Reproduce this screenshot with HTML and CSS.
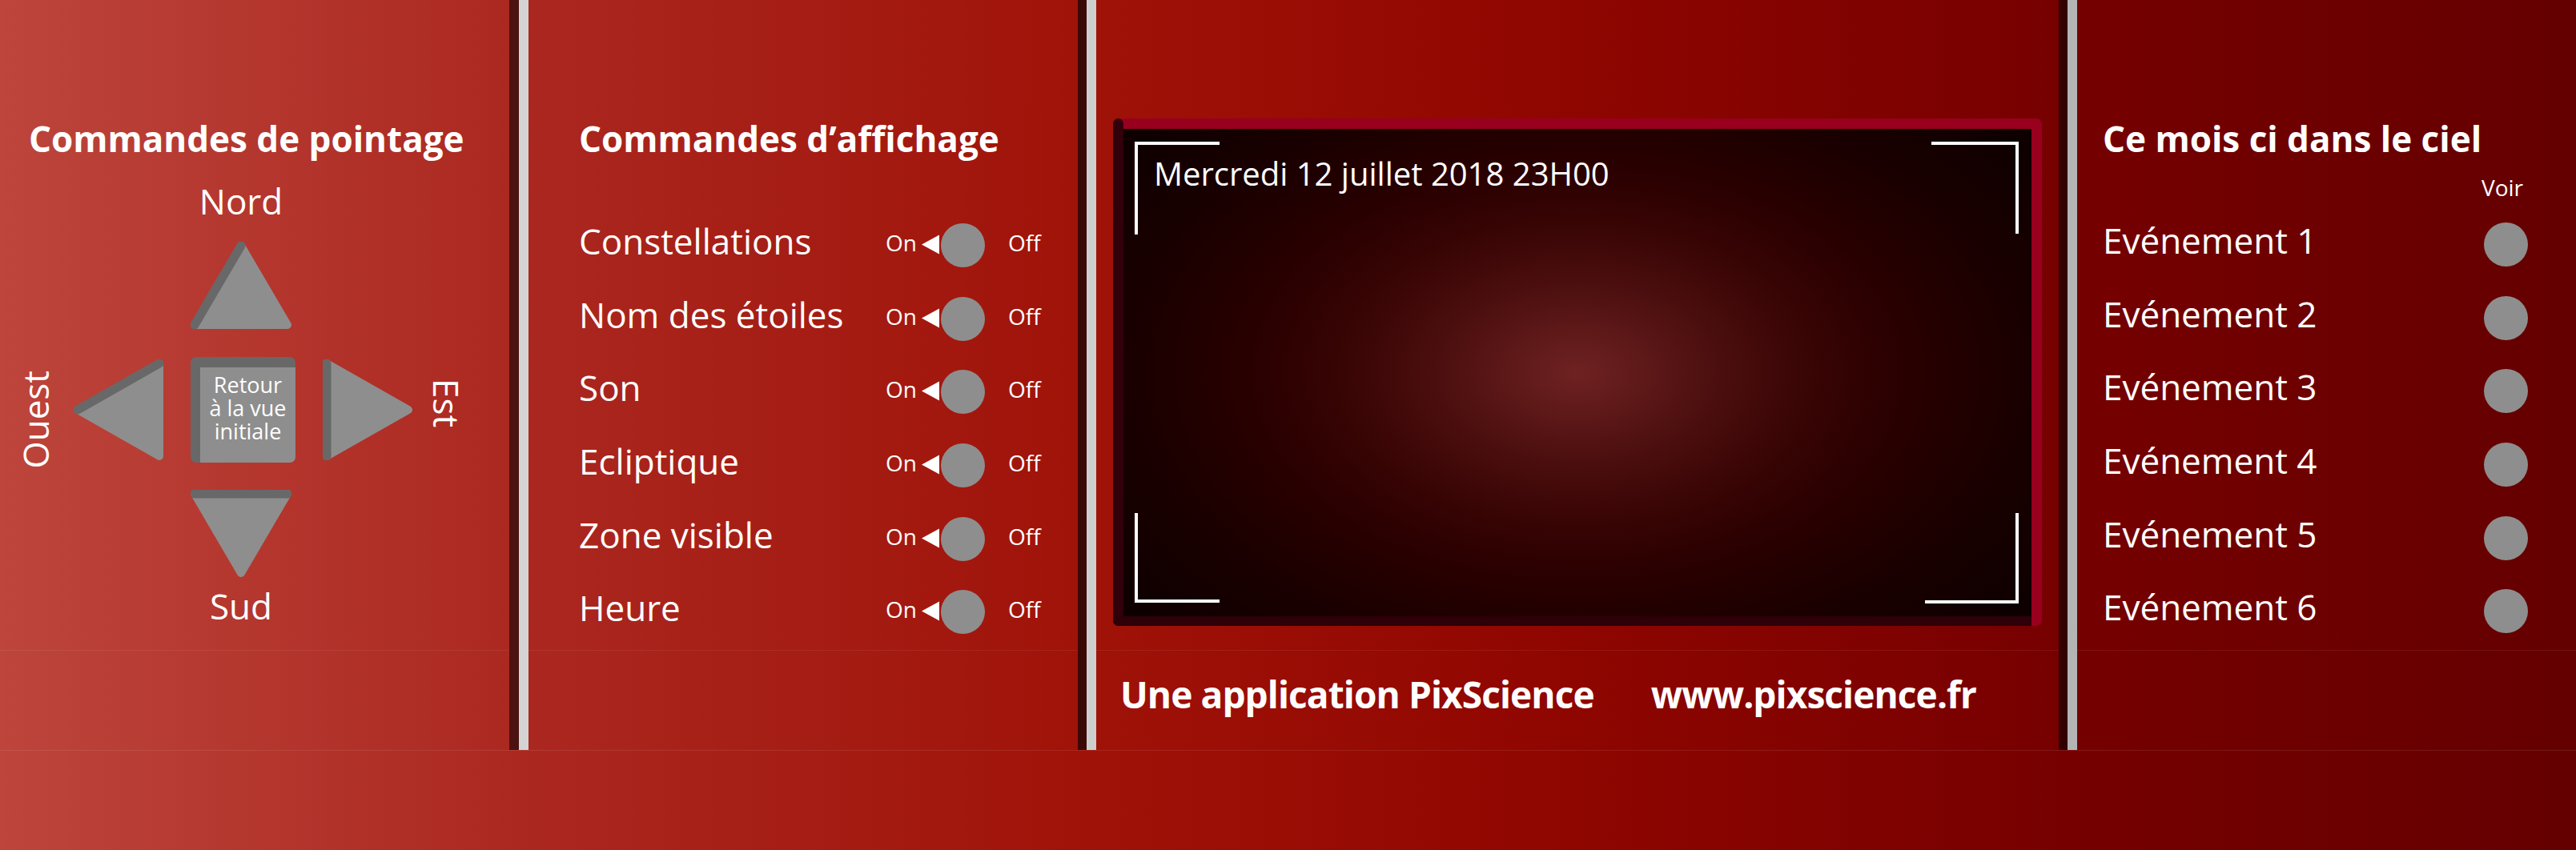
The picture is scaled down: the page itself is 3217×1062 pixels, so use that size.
FILE: index.html
```html
<!DOCTYPE html>
<html lang="fr">
<head>
<meta charset="utf-8">
<title>PixScience</title>
<link rel="stylesheet" href="styles.css">
</head>
<body>
<div class="main">
  <section class="panel p-point">
    <div class="panel-body">
      <h2 class="title">Commandes de pointage</h2>
      <div class="dpad">
        <div class="compass nord">Nord</div>
        <svg class="arrow-up" width="126" height="109" viewBox="0 0 126 109"><polygon points="5,104 63,5 121,104" fill="#8e8e8e" stroke="#8e8e8e" stroke-width="10" stroke-linejoin="round"/><line x1="5" y1="104" x2="63" y2="5" stroke="#686868" stroke-width="11" stroke-linecap="round"/></svg>
        <div class="mid-row">
          <div class="compass ouest">Ouest</div>
          <svg class="arrow-left" width="112" height="126" viewBox="0 0 112 126"><polygon points="5,63 107,5 107,121" fill="#8e8e8e" stroke="#8e8e8e" stroke-width="10" stroke-linejoin="round"/><line x1="5" y1="63" x2="107" y2="5" stroke="#686868" stroke-width="11" stroke-linecap="round"/></svg>
          <div class="center-box"><span class="cb-line">Retour</span><span class="cb-line">à la vue</span><span class="cb-line">initiale</span></div>
          <svg class="arrow-right" width="112" height="126" viewBox="0 0 112 126"><polygon points="5,5 107,63 5,121" fill="#8e8e8e" stroke="#8e8e8e" stroke-width="10" stroke-linejoin="round"/><line x1="5" y1="5" x2="5" y2="121" stroke="#686868" stroke-width="11" stroke-linecap="round"/></svg>
          <div class="compass est">Est</div>
        </div>
        <svg class="arrow-down" width="126" height="109" viewBox="0 0 126 109"><polygon points="5,5 121,5 63,104" fill="#8e8e8e" stroke="#8e8e8e" stroke-width="10" stroke-linejoin="round"/><line x1="5" y1="5" x2="121" y2="5" stroke="#686868" stroke-width="11" stroke-linecap="round"/></svg>
        <div class="compass sud">Sud</div>
      </div>
    </div>
    <div class="panel-foot"></div>
  </section>
  <div class="divider d1"></div>
  <section class="panel p-aff">
    <div class="panel-body">
      <h2 class="title">Commandes d’affichage</h2>
      <div class="rows">
        <div class="row"><span class="label">Constellations</span><div class="toggle"><span class="on">On</span><svg class="tri" width="22" height="25" viewBox="0 0 22 25"><polygon points="0,12.5 22,0.5 22,24.5" fill="#fff"/></svg><span class="knob"></span><span class="off">Off</span></div></div>
        <div class="row"><span class="label">Nom des étoiles</span><div class="toggle"><span class="on">On</span><svg class="tri" width="22" height="25" viewBox="0 0 22 25"><polygon points="0,12.5 22,0.5 22,24.5" fill="#fff"/></svg><span class="knob"></span><span class="off">Off</span></div></div>
        <div class="row"><span class="label">Son</span><div class="toggle"><span class="on">On</span><svg class="tri" width="22" height="25" viewBox="0 0 22 25"><polygon points="0,12.5 22,0.5 22,24.5" fill="#fff"/></svg><span class="knob"></span><span class="off">Off</span></div></div>
        <div class="row"><span class="label">Ecliptique</span><div class="toggle"><span class="on">On</span><svg class="tri" width="22" height="25" viewBox="0 0 22 25"><polygon points="0,12.5 22,0.5 22,24.5" fill="#fff"/></svg><span class="knob"></span><span class="off">Off</span></div></div>
        <div class="row"><span class="label">Zone visible</span><div class="toggle"><span class="on">On</span><svg class="tri" width="22" height="25" viewBox="0 0 22 25"><polygon points="0,12.5 22,0.5 22,24.5" fill="#fff"/></svg><span class="knob"></span><span class="off">Off</span></div></div>
        <div class="row"><span class="label">Heure</span><div class="toggle"><span class="on">On</span><svg class="tri" width="22" height="25" viewBox="0 0 22 25"><polygon points="0,12.5 22,0.5 22,24.5" fill="#fff"/></svg><span class="knob"></span><span class="off">Off</span></div></div>
      </div>
    </div>
    <div class="panel-foot"></div>
  </section>
  <div class="divider d2"></div>
  <section class="panel p-screen">
    <div class="panel-body">
      <div class="screen">
        <div class="sky">
          <div class="date">Mercredi 12 juillet 2018 23H00</div>
          <span class="bracket b-tl"></span>
          <span class="bracket b-tr"></span>
          <span class="bracket b-bl"></span>
          <span class="bracket b-br"></span>
        </div>
      </div>
    </div>
    <div class="panel-foot">
      <span>Une application PixScience</span>
      <span>www.pixscience.fr</span>
    </div>
  </section>
  <div class="divider d3"></div>
  <section class="panel p-events">
    <div class="panel-body">
      <h2 class="title">Ce mois ci dans le ciel</h2>
      <div class="voir">Voir</div>
      <div class="rows">
        <div class="row"><span class="label">Evénement 1</span><span class="knob"></span></div>
        <div class="row"><span class="label">Evénement 2</span><span class="knob"></span></div>
        <div class="row"><span class="label">Evénement 3</span><span class="knob"></span></div>
        <div class="row"><span class="label">Evénement 4</span><span class="knob"></span></div>
        <div class="row"><span class="label">Evénement 5</span><span class="knob"></span></div>
        <div class="row"><span class="label">Evénement 6</span><span class="knob"></span></div>
      </div>
    </div>
    <div class="panel-foot"></div>
  </section>
</div>
</body>
</html>
```
FILE: styles.css
```css
html, body {
  margin: 0;
  padding: 0;
}
body {
  width: 3217px;
  height: 1062px;
  overflow: hidden;
  background: linear-gradient(to right, #bd453c 0%, #ab2820 20%, #9f1208 42.6%, #900600 60%, #760000 80%, #640000 100%);
  font-family: "Open Sans", "Noto Sans", sans-serif;
  color: #fff;
}
.main {
  display: flex;
  height: 937px;
  border-bottom: 1px solid rgba(255, 255, 255, 0.09);
}
.panel {
  display: flex;
  flex-direction: column;
  flex: none;
}
.p-point { width: 636px; }
.p-aff { width: 686px; }
.p-screen { width: 1202px; }
.p-events { width: 623px; }
.panel-body {
  height: 812px;
  box-sizing: border-box;
  padding-top: 143px;
}
.panel-foot {
  flex: 1;
  border-top: 1px solid rgba(255, 255, 255, 0.07);
}
.divider {
  flex: none;
  width: 12px;
  background: #d4d4d4;
}
.d1 { border-left: 12px solid #4a1311; }
.d2 { border-left: 11px solid #3b0805; background: #cecece; }
.d3 { border-left: 11px solid #320000; background: #b4b4b4; }

.title {
  margin: 0;
  font-size: 44px;
  font-weight: 700;
  line-height: 60px;
  white-space: nowrap;
}

/* Pointage */
.p-point .title { padding-left: 36px; }
.dpad {
  margin: 27px 0 0 27px;
  width: 548px;
  display: flex;
  flex-direction: column;
  align-items: center;
}
.compass {
  font-size: 44px;
  line-height: 42px;
  white-space: nowrap;
}
.arrow-up { display: block; margin-top: 30px; }
.mid-row {
  display: flex;
  align-items: center;
  height: 132px;
  margin-top: 35px;
  width: 100%;
}
.ouest {
  writing-mode: vertical-rl;
  text-orientation: sideways;
  transform: rotate(180deg);
  line-height: 35px;
  margin-right: 30px;
  margin-top: 24px;
}
.arrow-left { display: block; margin-right: 34px; }
.center-box {
  width: 131px;
  height: 132px;
  box-sizing: border-box;
  border-top: 13px solid #686868;
  border-left: 12px solid #686868;
  border-radius: 7px;
  background: #8e8e8e;
  margin-right: 34px;
  display: flex;
  flex-direction: column;
  align-items: center;
  padding-top: 10px;
  font-size: 27px;
}
.cb-line {
  display: block;
  height: 29px;
  line-height: 24px;
  white-space: nowrap;
}
.arrow-right { display: block; margin-right: 25px; }
.est {
  writing-mode: vertical-rl;
  text-orientation: sideways;
  line-height: 35px;
  margin-bottom: 16px;
}
.arrow-down { display: block; margin-top: 34px; }
.sud { margin-top: 15px; }

/* Affichage */
.p-aff .panel-body { padding-left: 63px; }
.rows {
  display: flex;
  flex-direction: column;
  row-gap: 36.7px;
  margin-top: 76px;
}
.row {
  display: flex;
  align-items: flex-start;
  height: 55px;
}
.label {
  font-size: 44px;
  line-height: 45px;
  white-space: nowrap;
}
.p-aff .label {
  width: 383px;
  flex: none;
}
.toggle {
  display: flex;
  align-items: flex-start;
}
.on, .off {
  font-size: 28px;
  line-height: 48px;
}
.tri {
  display: block;
  margin: 14px 2px 0 6px;
}
.knob {
  display: block;
  flex: none;
  width: 55px;
  height: 55px;
  border-radius: 50%;
  background: #8e8e8e;
}
.off { margin-left: 29px; }

/* Screen */
.p-screen .panel-body {
  padding: 148px 21px 0 21px;
}
.screen {
  position: relative;
  height: 634px;
  box-sizing: border-box;
  background: #98001e;
  border-radius: 7px;
  padding: 13px 13px 12px 13px;
  display: flex;
  flex-direction: column;
}
.screen::before {
  content: "";
  position: absolute;
  left: 0;
  top: 0;
  bottom: 0;
  width: 13px;
  background: #32000a;
  border-radius: 7px 7px 0 7px;
}
.screen::after {
  content: "";
  position: absolute;
  left: 0;
  right: 13px;
  bottom: 0;
  height: 12px;
  background: #2e0008;
  border-radius: 0 0 0 7px;
}
.sky {
  position: relative;
  flex: 1;
  background: radial-gradient(ellipse 720px 460px at center, #6f2222 0%, #5f1919 11%, #4b0e0e 25%, #380404 41%, #290000 57%, #1a0000 77%, #0e0000 100%);
}
.date {
  font-size: 40px;
  line-height: 48px;
  padding: 32px 0 0 38px;
  white-space: nowrap;
}
.bracket {
  position: absolute;
  box-sizing: border-box;
  border: 0 solid #fff;
}
.b-tl { left: 14px; top: 16px; width: 106px; height: 116px; border-top-width: 4px; border-left-width: 4px; }
.b-tr { right: 16px; top: 16px; width: 109px; height: 115px; border-top-width: 4px; border-right-width: 4px; }
.b-bl { left: 14px; bottom: 17px; width: 106px; height: 112px; border-bottom-width: 4px; border-left-width: 4px; }
.b-br { right: 16px; bottom: 16px; width: 117px; height: 113px; border-bottom-width: 4px; border-right-width: 4px; }

.p-screen .panel-foot {
  display: flex;
  gap: 71px;
  padding: 29px 0 0 30px;
  font-size: 46px;
  font-weight: 700;
  letter-spacing: -0.9px;
  line-height: 50px;
  white-space: nowrap;
}

/* Events */
.p-events .panel-body {
  padding-left: 32px;
  padding-right: 60px;
}
.voir {
  text-align: right;
  font-size: 28px;
  line-height: 30px;
  margin-top: 16px;
  padding-right: 6px;
}
.p-events .rows { margin-top: 29px; }
.p-events .row { justify-content: space-between; }
```
